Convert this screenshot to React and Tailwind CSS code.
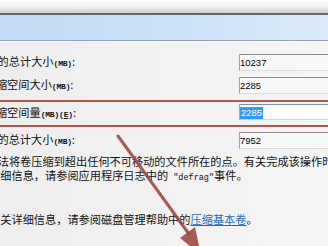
const cjk = "font-['Noto_Sans_CJK_SC','Noto_Sans',sans-serif]";

function Unit({ children }) {
  return (
    <span className="font-['Liberation_Mono',monospace] text-[8px] font-bold tracking-[-0.2px]">
      {children}
    </span>
  );
}

function Field({ value }) {
  return (
    <div className="w-[100px] h-[17px] shrink-0 border border-t-[#8c8c8c] border-l-[#a3a3a3] border-r-[#e2e2e2] border-b-[#dcdcdc] bg-[#f8f8f8] font-['Liberation_Sans',sans-serif] text-[9.5px] leading-[15px] text-black">
      {value}
    </div>
  );
}

function Label({ shift, text, children }) {
  return (
    <div className="w-[239px] shrink-0 overflow-hidden whitespace-nowrap leading-[17px]">
      <span style={{ marginLeft: shift }}>{text}</span>
      {children}
    </div>
  );
}

export default function App() {
  return (
    <div
      className={`relative w-[328px] h-[246px] overflow-hidden bg-gradient-to-r from-[#eeeeee] to-[#f5f5f5] text-[11.2px] text-[#111] ${cjk}`}
    >
      {/* window chrome */}
      <div className="h-[13px] bg-gradient-to-b from-[#fcfcfc] via-[#f2f2f2] to-[#cdcdcd]" />
      <div className="h-[2px] bg-[#676767]" />
      <div className="h-[25px] bg-gradient-to-r from-[#c1dbf6] via-[#c9e1f9] to-[#dbebfb]" />
      <div className="h-px bg-[#98a2ab]" />
      <div className="h-px bg-[#fbfbfb]" />

      <div className="pt-[12px]">
        <div className="flex items-center h-[17px]">
          <Label shift="-13.6px" text="前的总计大小">
            <Unit>(MB)</Unit>:
          </Label>
          <Field value="10237" />
        </div>

        <div className="flex items-center h-[17px] mt-[6px]">
          <Label shift="-15.3px" text="压缩空间大小">
            <Unit>(MB)</Unit>:
          </Label>
          <Field value="2285" />
        </div>

        {/* highlighted row */}
        <div className="mt-[6px] border-y-2 border-[#b0554e]">
          <div className="flex items-start h-[23px] pt-[2px]">
            <div className="w-[239px] shrink-0 overflow-hidden whitespace-nowrap leading-[16px]">
              <span className="ml-[-15.3px]">压缩空间量</span>
              <Unit>(MB)</Unit>
              <Unit>
                (<span className="underline">E</span>)
              </Unit>
              :
            </div>
            <div className="w-[100px] h-[16px] shrink-0 border border-t-[#7194b8] border-l-[#8fb0cf] border-r-[#c5d8ea] border-b-[#c5d8ea] bg-white pt-px font-['Liberation_Sans',sans-serif] text-[9.5px]">
              <span className="inline-block h-[12px] leading-[12px] px-px bg-[#3399ff] text-white">
                2285
              </span>
            </div>
          </div>
        </div>

        <div className="flex items-center h-[17px] mt-[5px]">
          <Label shift="-24.9px" text="之后的总计大小">
            <Unit>(MB)</Unit>:
          </Label>
          <Field value="7952" />
        </div>

        <div className="mt-[5px] leading-[14px] whitespace-nowrap">
          <div className="ml-[-13.5px]">无法将卷压缩到超出任何不可移动的文件所在的点。有关完成该操作时</div>
          <div className="ml-[-10.9px]">
            详细信息，请参阅应用程序日志中的
            <span className="font-['Liberation_Mono',monospace] text-[8.5px]"> "defrag"</span>
            事件。
          </div>
          <div className="ml-[-10.9px] mt-[27px]">
            有关详细信息，请参阅磁盘管理帮助中的
            <span className="text-[#1c6bbd] underline">压缩基本卷</span>。
          </div>
        </div>
      </div>

      {/* red annotation arrow */}
      <svg className="absolute left-0 top-0 pointer-events-none" width="328" height="246">
        <line x1="118" y1="136" x2="189" y2="234" stroke="#9e4a44" strokeWidth="3" strokeLinecap="round" opacity="0.9" />
        <polygon points="201,255 180,238 195,227" fill="#9e4a44" opacity="0.9" />
      </svg>
    </div>
  );
}
